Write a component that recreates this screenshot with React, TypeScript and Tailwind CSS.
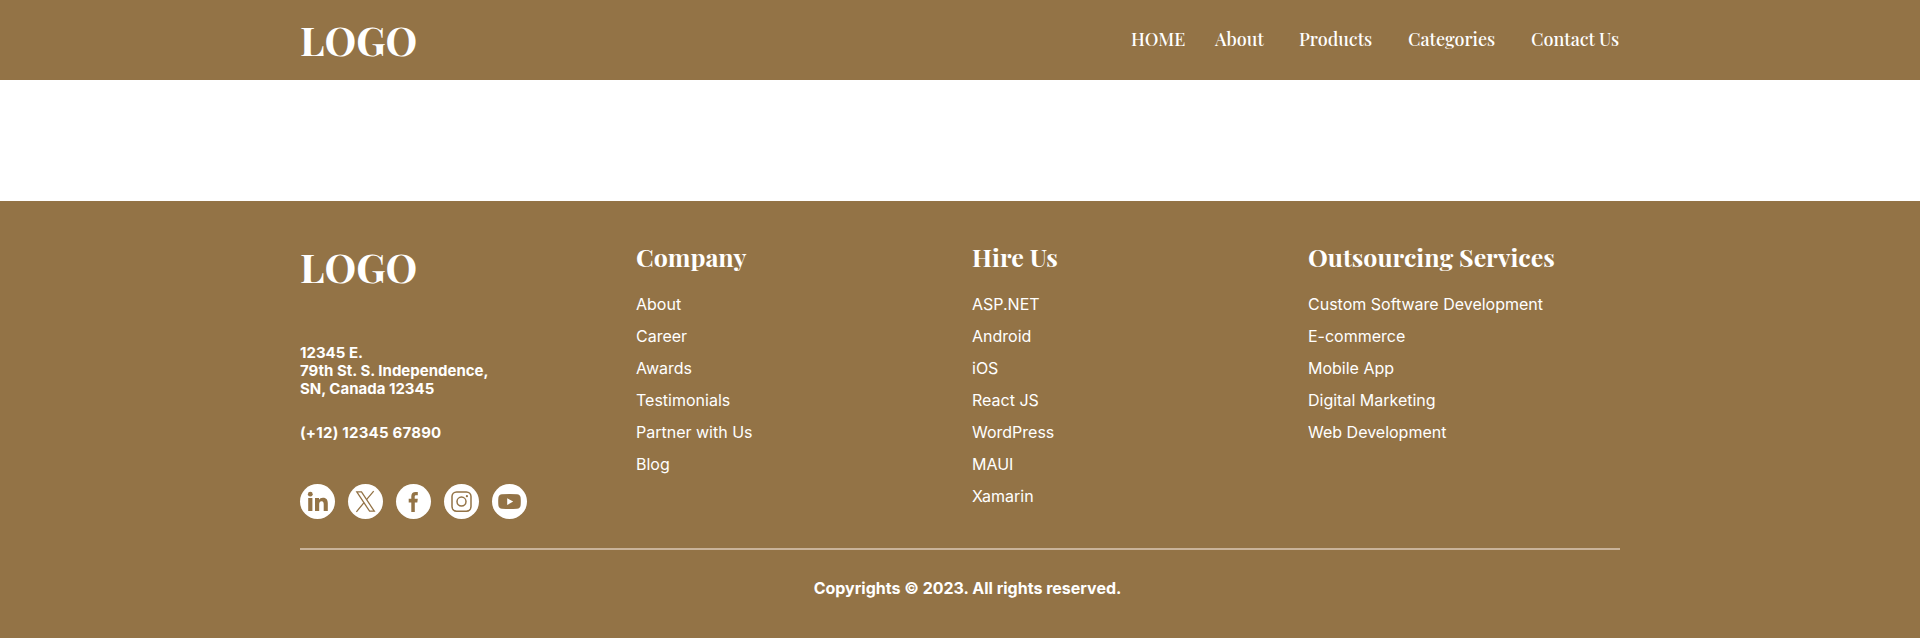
const serif = "font-['Playfair_Display','Liberation_Serif',serif]";

const navItems = [
  { label: 'HOME', style: 'w-[84px]' },
  { label: 'About', style: 'w-[84px]' },
  { label: 'Products', style: 'w-[109px]' },
  { label: 'Categories', style: 'w-[123px]' },
  { label: 'Contact Us', style: 'w-[89px]' },
];

const columns = [
  {
    title: 'Company',
    style: 'w-[336px]',
    links: ['About', 'Career', 'Awards', 'Testimonials', 'Partner with Us', 'Blog'],
  },
  {
    title: 'Hire Us',
    style: 'w-[336px]',
    links: ['ASP.NET', 'Android', 'iOS', 'React JS', 'WordPress', 'MAUI', 'Xamarin'],
  },
  {
    title: 'Outsourcing Services',
    style: 'w-[312px]',
    links: ['Custom Software Development', 'E-commerce', 'Mobile App', 'Digital Marketing', 'Web Development'],
  },
];

function LinkedInIcon() {
  return (
    <svg viewBox="0 0 35 35" className="size-[35px]" fill="currentColor">
      <circle cx="10.3" cy="10.2" r="2.4" />
      <path d="M8.2 14h4.2v13H8.2z" />
      <path d="M15 14h4v1.8c.7-1.3 2.1-2.1 3.9-2.1 3.8 0 4.9 2.3 4.9 5.9V27h-4.1v-6.5c0-1.8-.3-3.2-2.1-3.2-1.9 0-2.4 1.4-2.4 3.2V27H15z" />
    </svg>
  );
}

function XIcon() {
  return (
    <svg viewBox="0 0 35 35" className="size-[35px]" fill="none" stroke="currentColor">
      <path d="M8.8 7.9h4.7L26.3 27.2h-4.7z" strokeWidth="1.3" />
      <path d="M25.7 7.2 18.5 15.6M16 18.6 8.4 27.8" strokeWidth="1.3" />
    </svg>
  );
}

function FacebookIcon() {
  return (
    <svg viewBox="0 0 35 35" className="size-[35px]" fill="currentColor">
      <path d="M15.3 28v-9.5h-2.6v-3.7h2.6v-2.5c0-2.9 1.6-4.4 4.3-4.4.9 0 1.7.1 2.2.2v3.2h-1.6c-1.2 0-1.5.6-1.5 1.5v2h3.1l-.5 3.7h-2.5V28z" />
    </svg>
  );
}

function InstagramIcon() {
  return (
    <svg viewBox="0 0 35 35" className="size-[35px]" fill="none" stroke="currentColor" strokeWidth="1.5">
      <rect x="8" y="8" width="19" height="19.2" rx="4.6" />
      <circle cx="17.5" cy="17.6" r="4.5" />
      <circle cx="22.9" cy="12.2" r="1.1" fill="currentColor" stroke="none" />
    </svg>
  );
}

function YoutubeIcon() {
  return (
    <svg viewBox="0 0 35 35" className="size-[35px]" fill="currentColor">
      <path
        fillRule="evenodd"
        d="M10 10.2Q17.5 9.6 25 10.2Q28.2 10.5 28.6 13.4Q29 17.5 28.6 21.6Q28.2 24.5 25 24.8Q17.5 25.4 10 24.8Q6.8 24.5 6.4 21.6Q6 17.5 6.4 13.4Q6.8 10.5 10 10.2ZM15.2 14.2V21L21.2 17.6Z"
      />
    </svg>
  );
}

const socials = [
  { name: 'LinkedIn', icon: <LinkedInIcon /> },
  { name: 'X', icon: <XIcon /> },
  { name: 'Facebook', icon: <FacebookIcon /> },
  { name: 'Instagram', icon: <InstagramIcon /> },
  { name: 'YouTube', icon: <YoutubeIcon /> },
];

function Logo() {
  return <div className={`${serif} text-[40px] leading-[50px] font-bold`}>LOGO</div>;
}

export default function App() {
  return (
    <div className="h-[638px] w-full bg-white font-['Inter',sans-serif] text-white">
      <header className="h-20 bg-[#937346]">
        <div className="mx-auto flex h-full w-[1320px] items-start justify-between">
          <div className="pt-[15px]">
            <Logo />
          </div>
          <nav className={`${serif} flex pt-[27px] text-[18px] leading-6 font-medium whitespace-nowrap`}>
            {navItems.map((item) => (
              <a key={item.label} href="#" className={item.style}>
                {item.label}
              </a>
            ))}
          </nav>
        </div>
      </header>

      <main className="h-[121px]" />

      <footer className="h-[437px] bg-[#937346]">
        <div className="mx-auto w-[1320px]">
          <div className="flex h-[347px]">
            <section className="w-[336px] pt-[41px]">
              <Logo />
              <address className="mt-[52px] text-[15px] leading-[18px] font-bold not-italic">
                12345 E.
                <br />
                79th St. S. Independence,
                <br />
                SN, Canada 12345
              </address>
              <p className="mt-[26px] text-[15px] leading-[18px] font-bold tracking-[0.22px]">(+12) 12345 67890</p>
              <div className="mt-[42px] flex gap-[13px]">
                {socials.map((s) => (
                  <a
                    key={s.name}
                    href="#"
                    aria-label={s.name}
                    className="flex size-[35px] items-center justify-center rounded-full bg-white text-[#937346]"
                  >
                    {s.icon}
                  </a>
                ))}
              </div>
            </section>
            {columns.map((col) => (
              <section key={col.title} className={`${col.style} pt-10`}>
                <h2 className={`${serif} text-[25px] leading-8 font-bold whitespace-nowrap`}>{col.title}</h2>
                <ul className="mt-[15px]">
                  {col.links.map((link) => (
                    <li key={link} className="h-8 text-[16px] leading-8 font-normal whitespace-nowrap">
                      {link}
                    </li>
                  ))}
                </ul>
              </section>
            ))}
          </div>
          <div className="h-[2px] bg-[#c9b39a]" />
          <p className="mt-[28px] pl-[15px] text-center text-[16px] leading-5 font-bold">
            Copyrights © 2023. All rights reserved.
          </p>
        </div>
      </footer>
    </div>
  );
}
